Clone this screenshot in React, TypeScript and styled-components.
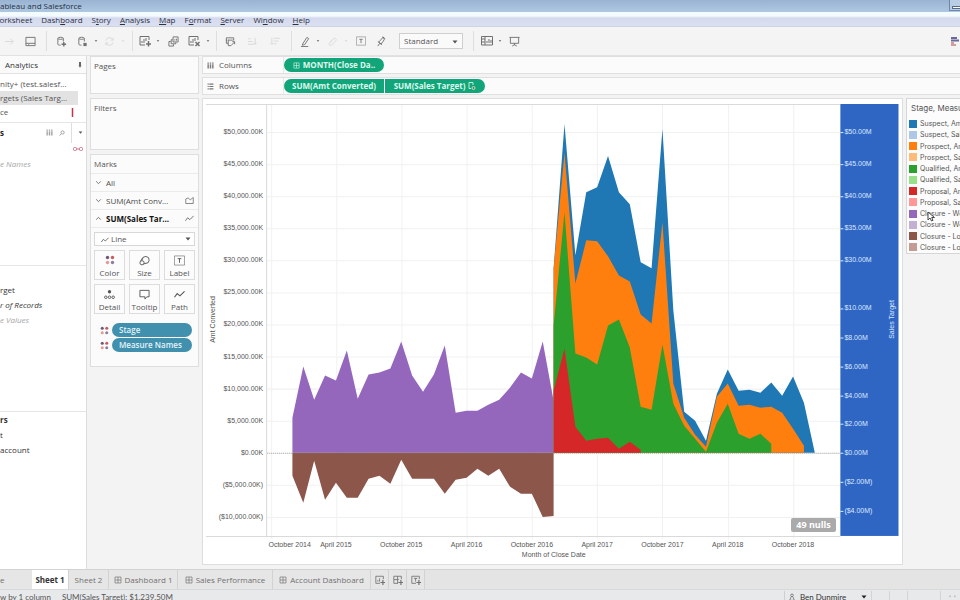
import React from "react";
import styled, { createGlobalStyle, css } from "styled-components";

const UI = `"Open Sans", "Noto Sans", sans-serif`;
const CHART = `"Liberation Sans", Arial, sans-serif`;

const Global = createGlobalStyle`
  * { box-sizing: border-box; }
  html, body { margin: 0; padding: 0; }
  body { font: 8px/12px ${UI}; color: #555; background: #f3f3f3; overflow: hidden; }
  button, select, input { font: inherit; color: inherit; }
  button { border: 0; background: none; padding: 0; margin: 0; white-space: nowrap; }
  ul { list-style: none; margin: 0; padding: 0; }
  h1, h2, h3 { font-size: inherit; font-weight: 400; margin: 0; }
  svg { display: block; flex: none; }
`;

const Window = styled.div`
  display: flex;
  flex-direction: column;
  height: 100vh;
  overflow: hidden;
`;

/* ---------- Window chrome ---------- */

const TitleBar = styled.header`
  display: flex;
  justify-content: space-between;
  height: 12px;
  flex: none;
  background: linear-gradient(#9ab3d2, #aec8e2);
  color: #25303f;
  h1 { line-height: 11px; }
`;

const WindowButton = styled.button`
  width: 11px;
  height: 11px;
  border: 1px solid #6d88aa;
  border-width: 0 0 1px 1px;
  background: #b9cde4;
  overflow: hidden;
  svg { margin: 3px 0 0 2px; }
`;

const MenuBar = styled.nav`
  display: flex;
  flex: none;
  gap: 9px;
  height: 15px;
  padding-top: 2px;
  border-bottom: 1px solid #cfd3e0;
  background: linear-gradient(#f4fbff 0, #f4fbff 4px, #d4d9ee 6px, #dbe0f1 100%);
`;

const MenuItem = styled.button<{ $clipped?: boolean }>`
  color: #2d3140;
  line-height: 12px;
  u { text-decoration-thickness: 1px; text-underline-offset: 1px; }
  ${(p) => p.$clipped && css`margin-left: -8px;`}
`;

const Toolbar = styled.div`
  display: flex;
  align-items: center;
  flex: none;
  height: 29px;
  border-bottom: 1px solid #e2e2e2;
  background: #f4f4f4;
`;

const Tool = styled.button<{ $w: number; $faint?: boolean }>`
  display: flex;
  justify-content: center;
  align-items: center;
  width: ${(p) => p.$w}px;
  height: 20px;
  flex: none;
  color: #707070;
  opacity: ${(p) => (p.$faint ? 0.2 : 1)};
`;

const Rule = styled.span<{ $w: number }>`
  width: ${(p) => p.$w}px;
  height: 20px;
  flex: none;
  background: linear-gradient(#dedede, #dedede) center / 1px 100% no-repeat;
`;

const Spacer = styled.span`
  flex: 1;
`;

const FitBox = styled.div`
  position: relative;
  width: 64px;
  height: 16px;
  margin: 0 6px 0 9px;
  border: 1px solid #cfcfcf;
  background: #fafafa;
  svg { position: absolute; right: 4px; top: 6px; pointer-events: none; }
`;

const PlainSelect = styled.select<{ $pad: number }>`
  appearance: none;
  display: block;
  width: 100%;
  height: 100%;
  padding: 0 0 0 ${(p) => p.$pad}px;
  border: 0;
  outline: 0;
  background: transparent;
`;

/* ---------- Body ---------- */

const Body = styled.div`
  display: flex;
  flex: 1;
  min-height: 0;
`;

const DataPane = styled.aside`
  width: 87px;
  flex: none;
  border-right: 1px solid #dcdcdc;
  background: #fff;
  overflow: hidden;
  white-space: nowrap;
`;

const PaneTab = styled.div`
  display: flex;
  justify-content: space-between;
  align-items: center;
  height: 18px;
  padding: 0 4px 0 5px;
  border-bottom: 1px solid #e2e2e2;
  background: #fafafa;
  color: #333;
`;

const Section = styled.section<{ $h: number; $top?: number }>`
  height: ${(p) => p.$h}px;
  padding-top: ${(p) => p.$top ?? 0}px;
  border-bottom: 1px solid #e6e6e6;
`;

const Source = styled.button<{ $on?: boolean }>`
  display: flex;
  justify-content: space-between;
  align-items: center;
  width: 78px;
  height: 14px;
  padding-right: 4px;
  background: ${(p) => (p.$on ? "#e2e2e2" : "none")};
`;

const PaneHead = styled.div`
  display: flex;
  align-items: center;
  height: 19px;
  gap: 6px;
  padding-right: 3px;
  color: #8a8a8a;
  h2 { font-weight: 700; color: #222; flex: 1; }
`;

const LinkMark = styled.div`
  display: flex;
  justify-content: flex-end;
  align-items: center;
  height: 14px;
  padding-right: 3px;
`;

const Field = styled.div<{ $italic?: boolean; $muted?: boolean; $bold?: boolean }>`
  height: 15px;
  line-height: 15px;
  font-style: ${(p) => (p.$italic ? "italic" : "normal")};
  font-weight: ${(p) => (p.$bold ? 700 : 400)};
  color: ${(p) => (p.$muted ? "#a6a6a6" : "#333")};
`;

const CardColumn = styled.div`
  display: flex;
  flex-direction: column;
  gap: 4px;
  width: 115px;
  flex: none;
  padding: 0 3px;
`;

const Card = styled.section<{ $h: number }>`
  height: ${(p) => p.$h}px;
  border: 1px solid #dedede;
  background: #fbfbfb;
  h2 { padding: 3px 3px 0; height: 18px; }
`;

const MarkRow = styled.button<{ $on?: boolean }>`
  display: flex;
  align-items: center;
  gap: 4px;
  width: 100%;
  height: 18px;
  padding: 0 4px;
  border-top: 1px solid #ebebeb;
  color: ${(p) => (p.$on ? "#111" : "#4c4c4c")};
  font-weight: ${(p) => (p.$on ? 700 : 400)};
  svg { color: #666; }
  span { flex: 1; text-align: left; }
`;

const MarkBody = styled.div`
  padding: 4px 3px 0;
  border-top: 1px solid #ebebeb;
`;

const MarkType = styled.div`
  position: relative;
  height: 14px;
  border: 1px solid #d8d8d8;
  background: #fff;
  > svg:first-child { position: absolute; left: 6px; top: 3px; }
  > svg:last-child { position: absolute; right: 3px; top: 4px; pointer-events: none; }
`;

const MarkGrid = styled.div`
  display: grid;
  grid-template-columns: repeat(3, 1fr);
  gap: 4px;
  margin-top: 4px;
`;

const MarkButton = styled.button`
  display: flex;
  flex-direction: column;
  align-items: center;
  justify-content: space-between;
  height: 30px;
  padding: 4px 0 0;
  border: 1px solid #dcdcdc;
  background: #fcfcfc;
`;

const Encodings = styled.ul`
  display: flex;
  flex-direction: column;
  gap: 1px;
  margin-top: 9px;
  padding: 0 3px 0 6px;
  li { display: flex; align-items: center; gap: 3px; }
`;

const BluePill = styled.button`
  flex: 1;
  height: 14px;
  padding: 0 7px;
  border-radius: 7px;
  background: #4190ae;
  color: #e4f3f9;
  font-weight: 600;
  line-height: 14px;
  text-align: left;
`;

const Main = styled.main`
  display: flex;
  flex-direction: column;
  flex: 1;
  min-width: 0;
`;

const Shelf = styled.section`
  display: flex;
  height: 18px;
  flex: none;
  margin-bottom: 3px;
  border: 1px solid #e0e0e0;
  border-right: 0;
  background: #fbfbfb;
`;

const ShelfName = styled.h2`
  display: flex;
  align-items: center;
  gap: 5px;
  width: 81px;
  padding-left: 4px;
  border-right: 1px solid #e8e8e8;
`;

const Pills = styled.div`
  display: flex;
  align-items: center;
  gap: 1px;
`;

const Pill = styled.button<{ $round: "both" | "left" | "right" }>`
  display: flex;
  align-items: center;
  justify-content: center;
  gap: 3px;
  width: 100px;
  height: 14px;
  border-radius: ${(p) => ({ both: "7px", left: "7px 0 0 7px", right: "0 7px 7px 0" })[p.$round]};
  background: #12a579;
  color: #dff9ef;
  font-weight: 700;
`;

const View = styled.div`
  display: flex;
  flex: 1;
  min-height: 0;
  gap: 3px;
`;

const ChartCard = styled.section`
  position: relative;
  flex: 1;
  min-width: 0;
  margin-bottom: 4px;
  border: 1px solid #dedede;
  background: #fff;
`;

const Plot = styled.svg`
  width: 100%;
  height: 100%;
  font-family: ${CHART};
  font-size: 7px;
  fill: #555;
`;

const Nulls = styled.button`
  position: absolute;
  right: 66px;
  bottom: 32px;
  width: 45px;
  height: 14px;
  border-radius: 2px;
  background: #aaa;
  color: #fff;
  font-size: 9px;
  font-weight: 700;
  line-height: 14px;
`;

const Legend = styled.aside`
  position: relative;
  width: 54px;
  height: 156px;
  flex: none;
  padding: 3px 0 0 2px;
  border: 1px solid #d6d6d6;
  border-right: 0;
  background: #fcfcfc;
  overflow: hidden;
  white-space: nowrap;
  h2 { margin: 0 0 4px 2px; font: 8px/12px Inter, ${UI}; }
  ul { display: grid; grid-template-rows: repeat(12, 1fr); height: 135px; }
  li { display: flex; align-items: center; gap: 3px; font: 7px/11px Inter, ${UI}; }
`;

const Swatch = styled.span<{ $c: string }>`
  width: 8px;
  height: 8px;
  flex: none;
  background: ${(p) => p.$c};
`;

const Cursor = styled.svg`
  position: absolute;
  left: 20px;
  top: 112px;
`;

/* ---------- Footer ---------- */

const Tabs = styled.nav`
  display: flex;
  height: 21px;
  flex: none;
  border-top: 1px solid #d2d2d2;
  border-bottom: 1px solid #d8d8d8;
  background: #e4e4e4;
`;

const Tab = styled.button<{ $w: number; $on?: boolean }>`
  display: flex;
  align-items: center;
  justify-content: center;
  gap: 3px;
  width: ${(p) => p.$w}px;
  border-right: 1px solid #d2d2d2;
  background: ${(p) => (p.$on ? "#fff" : "#e6e6e6")};
  color: ${(p) => (p.$on ? "#333" : "#707070")};
  font-weight: ${(p) => (p.$on ? 700 : 400)};
`;

const FirstTab = styled(Tab)`
  justify-content: flex-start;
  border-right: 0;
`;

const Status = styled.footer`
  display: flex;
  height: 10px;
  flex: none;
  padding-top: 1px;
  background: #e8e9eb;
  overflow: hidden;
  white-space: nowrap;
  gap: 11px;
  font-family: Lato, ${UI};
`;

const User = styled.button`
  display: flex;
  align-items: center;
  gap: 4px;
  width: 88px;
  height: 12px;
  padding: 0 4px 0 3px;
  border-left: 1px solid #cfcfcf;
  border-right: 1px solid #d4d4d4;
  span { flex: 1; text-align: left; color: #333; }
`;

const StatusCells = styled.div`
  display: grid;
  grid-template-columns: 18px 18px 33px 19px;
  height: 12px;
  margin-left: -11px;
  > * { border-right: 1px solid #d4d4d4; }
  > :last-child { border: 0; padding: 4px 0 0 5px; }
`;

/* ---------- Icons ---------- */

const Caret = ({ s = 4, color = "#555" }: { s?: number; color?: string }) => (
  <svg width={s + 2} height={s} viewBox="0 0 6 4" fill={color}><path d="M0.5 0.5h5L3 3.6z" /></svg>
);

type IconName =
  | "forward" | "save" | "dbAdd" | "db" | "refresh" | "sheetAdd" | "duplicate" | "sheetClear" | "swap"
  | "sortAsc" | "sortDesc" | "pen" | "clip" | "label" | "pin" | "cards" | "present"
  | "grid" | "newSheet" | "newDash" | "newStory" | "size" | "tooltip" | "path" | "area" | "up" | "down"
  | "columns" | "rows" | "find" | "detail" | "person";

const PATHS: Record<IconName, React.ReactNode> = {
  forward: <path d="M1 6h9M7 3l3 3-3 3" />,
  save: <path d="M1 1.500h10v9h-10zM1 8h10M4 10V9" />,
  dbAdd: <><path d="M2 2.500c0-1.500 6-1.500 6 0s-6 1.500-6 0v6.500c0 .8 1.500 1 3 1M8 2.500V6" /><path d="M8.500 6.500v5M6 9h5" strokeWidth="1.500" /></>,
  db: <><path d="M2 2.500c0-1.500 6-1.500 6 0s-6 1.500-6 0v6.500c0 .8 1.500 1 3 1M8 2.500V6" /><path d="M7 7.500h3.500v3.500H7z" fill="currentColor" stroke="none" /></>,
  refresh: <path d="M2 5a4 4 0 0 1 7.500-1M10 2v2.500H7.500M10 7a4 4 0 0 1-7.500 1M2 10V7.500h2.500" />,
  sheetAdd: <><path d="M10 5V1.500H1v8.500h5M3 8V6M5 8V4M7 6V3" /><path d="M9.500 6v5.500M7 9h5" strokeWidth="1.500" /></>,
  duplicate: <path d="M5.500 1h5.500v5.500H5.500zM5 4H3.500v4.500H8.500V7M3 6H1v5h5V9M7.500 5v-1.500M9.300 5V3" />,
  sheetClear: <><path d="M10 5V1.500H1v8.500h5M3 8V6M5 8V4M7 6V3" /><path d="M7.500 7l4 4M11.500 7l-4 4" strokeWidth="1.500" /></>,
  swap: <path d="M1.500 2h8v3M1.500 2v6h2M3.500 4v6.500h3L10.500 6.500M10.500 9V6.200H8M3.500 4.500h5M1 4.500h1" />,
  sortAsc: <path d="M1 3h3M1 6h5M1 9h7M9 2v7M7.500 7.500L9 9l1.500-1.500" />,
  sortDesc: <path d="M4 2.500h7M4 5.500h5M4 8.500h3M2 2v7M.5 7.500L2 9l1.500-1.500" />,
  pen: <path d="M3 8.500l4.500-7 2 1.300L5 9.500l-2.500.5zM1 11.500h8" />,
  clip: <path d="M3 7l4-4c2-1.500 4 .5 2.500 2.500L5 10c-2 1-3.500-.5-2.500-2L6 4.500" />,
  label: <><path d="M.5 1h11v10h-11z" strokeOpacity=".6" /><path d="M4 4h4M6 4v4.500" /></>,
  pin: <path d="M5 4.500L8 1l1 3-3.500 5L3 6.500zM7 1l3 2M2 6l4.500 3.500M4 8l-2 3" />,
  cards: <path d="M.5 1.500h11v8.500H.5zM.5 4H4M.5 7H4M4 1.500v8.500M6 8V6M8 8V4M10 8V5" />,
  present: <path d="M.5 1.500h11M1.500 1.500v6.500h9V1.500M6 8v2M3.500 11L6 9.500 8.500 11" />,
  grid: <path d="M1.500 1.500h9v9h-9zM6 1.500v9M1.500 6h9" />,
  newSheet: <><path d="M10 5V1.500H1v8.500h5M3.500 8V6M5.500 8V4" /><path d="M9.500 6v6M6.500 9h6" strokeWidth="1.400" /></>,
  newDash: <><path d="M10 5V1.500H1v8.500h5M5.500 1.500V10M1 5.500h6" /><path d="M9.500 6v6M6.500 9h6" strokeWidth="1.400" /></>,
  newStory: <><path d="M10 5V1.500H1v8.500h5M3.500 4h4M5.500 4v4" /><path d="M9.500 6v6M6.500 9h6" strokeWidth="1.400" /></>,
  size: <path d="M3.500 5.200a3.800 3.800 0 1 1 3.500 4M1 8.500a2.300 2.300 0 1 0 4.600 0 2.300 2.300 0 1 0-4.600 0M1.800 6.700L4 3M5 9.800L7.500 9" />,
  tooltip: <path d="M1 1.500h10v7H8.500L6.500 11V8.500H1z" />,
  path: <path d="M.5 9l3-4 3 2.500L11.500 2.500" strokeWidth="1.200" />,
  area: <path d="M1 10V4l3-1.500 3 2.500 4-3v8z" />,
  up: <path d="M2 8l4-4 4 4" strokeWidth="1.500" />,
  down: <path d="M2 4l4 4 4-4" strokeWidth="1.500" />,
  columns: <path d="M2 1v2M6 1v2M10 1v2M2 4v7M6 4v7M10 4v7" strokeWidth="2.500" strokeOpacity=".75" />,
  rows: <path d="M1 2h2M4 2h7M1 6h2M4 6h7M1 10h2M4 10h7" strokeWidth="2" strokeOpacity=".8" />,
  find: <path d="M4 5a3.200 3.200 0 1 0 6.400 0A3.200 3.200 0 1 0 4 5M4.500 7.500L1 11" strokeWidth="1.500" />,
  detail: <><circle cx="6" cy="3" r="1.800" fill="currentColor" stroke="none" /><circle cx="2" cy="9" r="1.400" /><circle cx="6" cy="9" r="1.400" /><circle cx="10" cy="9" r="1.400" /></>,
  person: <path d="M4 3.500a2 2 0 1 0 4 0 2 2 0 1 0-4 0M4.500 6L2.500 11h7L7.500 6" />,
};

const Icon = ({ name, size = 11 }: { name: IconName; size?: number }) => (
  <svg width={size} height={size} viewBox="0 0 12 12" fill="none" stroke="currentColor" strokeWidth="1" aria-hidden="true">
    {PATHS[name]}
  </svg>
);

const Dots = ({ size = 10 }: { size?: number }) => (
  <svg width={size} height={size} viewBox="0 0 10 10" aria-hidden="true">
    <circle cx="2.500" cy="2.500" r="1.700" fill="#6e5a72" />
    <circle cx="7.500" cy="2.500" r="1.700" fill="#c85a66" />
    <circle cx="2.500" cy="7.500" r="1.700" fill="#e59a94" />
    <circle cx="7.500" cy="7.500" r="1.700" fill="#8d7f9d" />
  </svg>
);

/* ---------- Chart ---------- */

const ZERO = 353;
const LEFT = 64;
const RIGHT = 636;
const TOP = 5;
const BOTTOM = 436;
const monthX = (i: number) => 67.5 + i * 10.86;

/* Heights above the zero line, one per month. */
const closureWon = [35, 86, 53, 77, 72, 102, 54, 78, 80, 84, 111, 77, 61, 78, 107, 40, 42, 42, 48, 53, 65, 80, 74, 111, 52];
const closureLost = [-23, -50, -8, -47, -30, -45, -45, -26, -23, -31, -7, -26, -26, -26, -41, -27, -25, -16, -23, -16, -34, -41, -41, -64, -63];
const suspect = [184, 328, 197, 260, 265, 296, 260, 248, 190, 184, 323, 142, 41, 32, 12, 59, 83, 62, 63, 60, 70, 57, 76, 50, 0];
const prospect = [184, 299, 169, 212, 211, 196, 177, 171, 138, 129, 230, 69, 35, 18, 6, 56, 69, 47, 48, 45, 46, 40, 24, 7];
const qualified = [127, 240, 99, 95, 88, 127, 133, 105, 46, 43, 108, 49, 27, 14, 1, 30, 49, 19, 14, 19, 9];
const proposal = [62, 104, 26, 12, 14, 15, 4, 11, 3];

const area = (from: number, heights: number[]) => {
  const tops = heights.map((h, i) => `${monthX(from + i)},${ZERO - h}`).join(" ");
  return `${monthX(from)},${ZERO} ${tops} ${monthX(from + heights.length - 1)},${ZERO}`;
};

const layers = [
  { from: 2, data: closureWon, fill: "#9467bd" },
  { from: 2, data: closureLost, fill: "#8c564b" },
  { from: 26, data: suspect, fill: "#1f77b4" },
  { from: 26, data: prospect, fill: "#ff7f0e" },
  { from: 26, data: qualified, fill: "#2ca02c" },
  { from: 26, data: proposal, fill: "#d62728" },
];

const leftTicks = [
  "$50,000.00K", "$45,000.00K", "$40,000.00K", "$35,000.00K", "$30,000.00K", "$25,000.00K", "$20,000.00K",
  "$15,000.00K", "$10,000.00K", "$5,000.00K", "$0.00K", "($5,000.00K)", "($10,000.00K)",
].map((label, i) => ({ label, y: ZERO + (i - 10) * 32 }));

const rightTicks: [string, number][] = [
  ["$50.00M", 33], ["$45.00M", 65], ["$40.00M", 97], ["$35.00M", 129], ["$30.00M", 161], ["$10.00M", 209],
  ["$8.00M", 238], ["$6.00M", 267], ["$4.00M", 296], ["$2.00M", 324], ["$0.00M", 353], ["($2.00M)", 382], ["($4.00M)", 411],
];

const dates: [string, number, number][] = [
  ["October 2014", 0, 19], ["April 2015", 6, 0], ["October 2015", 12, 0], ["April 2016", 18, 0], ["October 2016", 24, 0],
  ["April 2017", 30, 0], ["October 2017", 36, 0], ["April 2018", 42, 0], ["October 2018", 48, 0],
];

const SalesChart = () => (
  <Plot viewBox="0 0 697 464" preserveAspectRatio="xMinYMin meet" role="img" aria-label="Amt Converted and Sales Target by month of close date">
    {leftTicks.map((t) => <path key={t.label} d={`M${LEFT} ${t.y + 0.5}H${RIGHT}`} stroke="#f1f1f1" />)}
    {dates.map(([d, m]) => <path key={d} d={`M${Math.round(monthX(m)) + 0.5} ${TOP}V${BOTTOM + 3}`} stroke="#f1f1f1" />)}
    <path d={`M3 ${TOP + 0.5}H${RIGHT}M3 ${BOTTOM + 0.5}H${RIGHT}M${LEFT - 0.5} ${TOP}V${BOTTOM}`} stroke="#dadada" fill="none" />
    {layers.map((l) => <polygon key={l.fill} points={area(l.from, l.data)} fill={l.fill} />)}
    <path d={`M${LEFT} ${ZERO + 0.5}H${RIGHT}`} stroke="#777" strokeOpacity="0.6" strokeDasharray="1 1" />
    {leftTicks.map((t) => <text key={t.label} x="60" y={t.y + 2} textAnchor="end">{t.label}</text>)}
    {dates.map(([d, m, shift]) => <text key={d} x={monthX(m) + shift} y="447" textAnchor="middle">{d}</text>)}
    <text x="350" y="457" textAnchor="middle">Month of Close Date</text>
    <text transform="translate(12 220) rotate(-90)" textAnchor="middle">Amt Converted</text>
    <rect x={RIGHT} y={TOP} width="58" height={BOTTOM - TOP} fill="#2f66c4" />
    {rightTicks.map(([label, y]) => (
      <g key={label} fill="#dce8ff">
        <rect x={RIGHT} y={y} width="3" height="1" />
        <text x={RIGHT + 4} y={y + 2}>{label}</text>
      </g>
    ))}
    <text transform={`translate(${RIGHT + 54} 220) rotate(-90)`} textAnchor="middle" fill="#dce8ff">Sales Target</text>
  </Plot>
);

const legendItems: [string, string][] = [
  ["Suspect, Amt Converted", "#1f77b4"], ["Suspect, Sales Target", "#aec7e8"],
  ["Prospect, Amt Converted", "#ff7f0e"], ["Prospect, Sales Target", "#ffbb78"],
  ["Qualified, Amt Converted", "#2ca02c"], ["Qualified, Sales Target", "#98df8a"],
  ["Proposal, Amt Converted", "#d62728"], ["Proposal, Sales Target", "#ff9896"],
  ["Closure - Won, Amt Converted", "#9467bd"], ["Closure - Won, Sales Target", "#c5b0d5"],
  ["Closure - Lost, Amt Converted", "#8c564b"], ["Closure - Lost, Sales Target", "#c49c94"],
];

/* ---------- Toolbar content ---------- */

type ToolSpec = { icon: IconName | "caret" | "rule"; w: number; faint?: boolean; size?: number };

const toolsLeft: ToolSpec[] = [
  { icon: "forward", w: 18, faint: true }, { icon: "save", w: 24 }, { icon: "rule", w: 8 },
  { icon: "dbAdd", w: 22 }, { icon: "db", w: 20 }, { icon: "caret", w: 8 },
  { icon: "refresh", w: 18, faint: true }, { icon: "caret", w: 10, faint: true }, { icon: "rule", w: 8 },
  { icon: "sheetAdd", w: 18, size: 12 }, { icon: "caret", w: 8 }, { icon: "duplicate", w: 22 },
  { icon: "sheetClear", w: 20, size: 12 }, { icon: "caret", w: 8 }, { icon: "rule", w: 8 },
  { icon: "swap", w: 20 }, { icon: "sortAsc", w: 24, faint: true }, { icon: "sortDesc", w: 22, faint: true },
  { icon: "rule", w: 10 }, { icon: "pen", w: 18 }, { icon: "caret", w: 8 }, { icon: "clip", w: 20, faint: true },
  { icon: "caret", w: 8, faint: true }, { icon: "label", w: 22, size: 10 }, { icon: "pin", w: 18 },
];

const toolsRight: ToolSpec[] = [
  { icon: "rule", w: 8 }, { icon: "cards", w: 20, size: 12 }, { icon: "caret", w: 6 }, { icon: "present", w: 22 },
];

const renderTools = (tools: ToolSpec[]) =>
  tools.map((t, i) =>
    t.icon === "rule" ? (
      <Rule key={i} $w={t.w} />
    ) : (
      <Tool key={i} $w={t.w} $faint={t.faint} aria-label={t.icon}>
        {t.icon === "caret" ? <Caret s={2} /> : <Icon name={t.icon} size={t.size} />}
      </Tool>
    ),
  );

const menus: [string, string, string][] = [
  ["", "W", "orksheet"], ["Dash", "b", "oard"], ["S", "t", "ory"], ["", "A", "nalysis"], ["", "M", "ap"],
  ["F", "o", "rmat"], ["", "S", "erver"], ["Wi", "n", "dow"], ["", "H", "elp"],
];

const markButtons: [string, React.ReactNode][] = [
  ["Color", <Dots key="c" />], ["Size", <Icon key="s" name="size" />], ["Label", <Icon key="l" name="label" />],
  ["Detail", <Icon key="d" name="detail" />], ["Tooltip", <Icon key="t" name="tooltip" />], ["Path", <Icon key="p" name="path" />],
];

export default function App() {
  return (
    <Window>
      <Global />
      <TitleBar>
        <h1>ableau and Salesforce</h1>
        <WindowButton aria-label="Minimize">
          <svg width="8" height="6" viewBox="0 0 8 6"><rect x=".5" y="2.500" width="8" height="2" fill="#fff" stroke="#55698a" /></svg>
        </WindowButton>
      </TitleBar>
      <MenuBar>
        {menus.map(([a, key, b], i) => (
          <MenuItem key={key + b} $clipped={i === 0}>{a}<u>{key}</u>{b}</MenuItem>
        ))}
      </MenuBar>
      <Toolbar>
        {renderTools(toolsLeft)}
        <FitBox>
          <PlainSelect $pad={4} aria-label="Fit" defaultValue="Standard"><option>Standard</option></PlainSelect>
          <Caret s={4} />
        </FitBox>
        {renderTools(toolsRight)}
        <Spacer />
        <Tool $w={11} aria-label="Show Me">
          <svg width="8" height="9" viewBox="0 0 8 9"><path d="M0 1h6M0 3.500h8" stroke="#6a6a9c" strokeWidth="2" /><path d="M0 6h3M0 8h5" stroke="#c98080" strokeWidth="1.500" /></svg>
        </Tool>
      </Toolbar>

      <Body>
        <DataPane>
          <PaneTab>Analytics
            <svg width="4" height="6" viewBox="0 0 4 6" fill="#666"><path d="M1 0h2v3H1zM.5 3h3L2 6z" /></svg>
          </PaneTab>
          <Section $h={49} $top={3}>
            <Source>nity+ (test.salesf...</Source>
            <Source $on>rgets (Sales Targ...</Source>
            <Source>ce<svg width="3" height="9" viewBox="0 0 3 9"><path d="M1.500 0v9" stroke="#c23352" strokeWidth="1.500" /></svg></Source>
          </Section>
          <Section $h={143}>
            <PaneHead>
              <h2>s</h2>
              <Icon name="columns" size={7} />
              <Icon name="find" size={6} />
              <Rule $w={1} />
              <Caret s={3} />
            </PaneHead>
            <LinkMark><svg width="10" height="4" viewBox="0 0 10 4" fill="none" stroke="#cc7488"><rect x=".5" y=".5" width="3" height="3" rx="1" /><rect x="6.500" y=".5" width="3" height="3" rx="1" /><path d="M3 2h4" /></svg></LinkMark>
            <Field $italic $muted>e Names</Field>
          </Section>
          <Section $h={146} $top={16}>
            <Field>rget</Field>
            <Field $italic>r of Records</Field>
            <Field $italic $muted>e Values</Field>
          </Section>
          <Field $bold>rs</Field>
          <Field>t</Field>
          <Field>account</Field>
        </DataPane>

        <CardColumn>
          <Card $h={38}><h2>Pages</h2></Card>
          <Card $h={52}><h2>Filters</h2></Card>
          <Card $h={213}>
            <h2>Marks</h2>
            <MarkRow><Icon name="down" size={7} /><span>All</span></MarkRow>
            <MarkRow><Icon name="down" size={7} /><span>SUM(Amt Conv...</span><Icon name="area" size={9} /></MarkRow>
            <MarkRow $on><Icon name="up" size={7} /><span>SUM(Sales Tar...</span><Icon name="path" size={9} /></MarkRow>
            <MarkBody>
              <MarkType>
                <Icon name="path" size={8} />
                <PlainSelect $pad={16} aria-label="Mark type" defaultValue="Line"><option>Line</option></PlainSelect>
                <Caret s={4} />
              </MarkType>
              <MarkGrid>
                {markButtons.map(([label, icon]) => <MarkButton key={label}>{icon}{label}</MarkButton>)}
              </MarkGrid>
              <Encodings>
                <li><Dots size={9} /><BluePill>Stage</BluePill></li>
                <li><Dots size={9} /><BluePill>Measure Names</BluePill></li>
              </Encodings>
            </MarkBody>
          </Card>
        </CardColumn>

        <Main>
          <Shelf>
            <ShelfName><Icon name="columns" size={7} />Columns</ShelfName>
            <Pills>
              <Pill $round="both"><Icon name="grid" size={7} />MONTH(Close Da..</Pill>
            </Pills>
          </Shelf>
          <Shelf>
            <ShelfName><Icon name="rows" size={7} />Rows</ShelfName>
            <Pills>
              <Pill $round="left">SUM(Amt Converted)</Pill>
              <Pill $round="right">SUM(Sales Target)
                <svg width="8" height="9" viewBox="0 0 8 9" fill="none" stroke="#bff0dd"><path d="M5 3V.5H1v6h2" /><circle cx="5.500" cy="6" r="1.500" stroke="#e8d0b0" /></svg>
              </Pill>
            </Pills>
          </Shelf>
          <View>
            <ChartCard>
              <SalesChart />
              <Nulls>49 nulls</Nulls>
            </ChartCard>
            <Legend>
              <h2>Stage, Measure Names</h2>
              <ul>
                {legendItems.map(([name, color]) => <li key={name}><Swatch $c={color} />{name}</li>)}
              </ul>
              <Cursor width="8" height="11" viewBox="0 0 8 11"><path d="M1 1v8l2-2 1.500 3 1.500-.7L4.700 6.500H7.500z" fill="#fff" stroke="#444" /></Cursor>
            </Legend>
          </View>
        </Main>
      </Body>

      <Tabs>
        <FirstTab $w={32}>e</FirstTab>
        <Tab $w={37} $on>Sheet 1</Tab>
        <Tab $w={40}>Sheet 2</Tab>
        <Tab $w={69}><Icon name="grid" size={8} />Dashboard 1</Tab>
        <Tab $w={95}><Icon name="grid" size={8} />Sales Performance</Tab>
        <Tab $w={98}><Icon name="grid" size={8} />Account Dashboard</Tab>
        <Tab $w={18} aria-label="New worksheet"><Icon name="newSheet" size={10} /></Tab>
        <Tab $w={18} aria-label="New dashboard"><Icon name="newDash" size={10} /></Tab>
        <Tab $w={18} aria-label="New story"><Icon name="newStory" size={10} /></Tab>
      </Tabs>
      <Status>
        <span>w by 1 column</span>
        <span>SUM(Sales Target): $1,239.50M</span>
        <Spacer />
        <User><Icon name="person" size={8} /><span>Ben Dunmire</span><Caret s={4} color="#222" /></User>
        <StatusCells>
          <i /><i /><i />
          <svg width="19" height="10" viewBox="0 0 14 10" fill="#b5b5b5"><path d="M3 0v4L0 2zM11 0v4L8 2z" /></svg>
        </StatusCells>
      </Status>
    </Window>
  );
}
